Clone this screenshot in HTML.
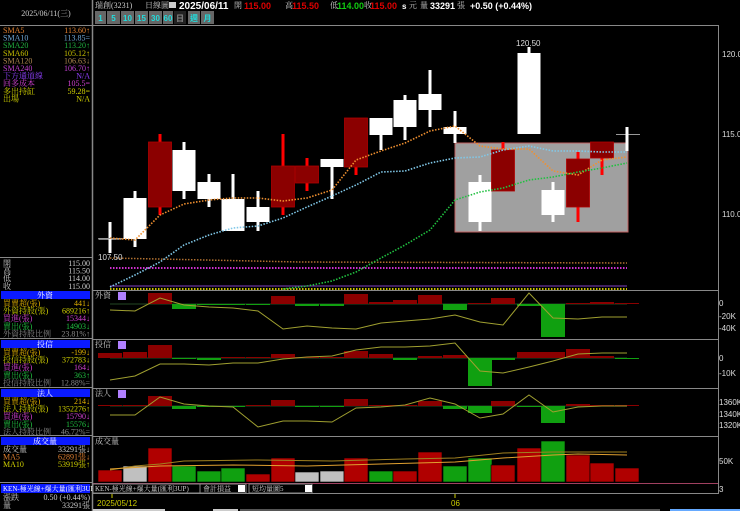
<!DOCTYPE html>
<html><head><meta charset="utf-8">
<style>
html,body{margin:0;padding:0;background:#000;width:740px;height:511px;overflow:hidden}
svg{display:block}
text{font-family:"Liberation Serif","Noto Serif CJK SC","Noto Sans CJK TC",serif;font-size:8px}
.b{font-family:"Liberation Sans","Noto Sans CJK TC",sans-serif;font-weight:bold}
.ax{font-family:"Liberation Sans",sans-serif;font-size:8px;fill:#ddd}
</style></head><body>
<svg id="s" width="740" height="511" viewBox="0 0 740 511" xmlns="http://www.w3.org/2000/svg">
<rect width="740" height="511" fill="#000"/>
<g id="g"></g>
<!-- frames -->
<line x1="92.5" y1="0" x2="92.5" y2="511" stroke="#888" stroke-width="1.5"/>
<line x1="0" y1="25.5" x2="92" y2="25.5" stroke="#888"/>
<line x1="93" y1="25.5" x2="718" y2="25.5" stroke="#888"/>
<line x1="718.5" y1="25" x2="718.5" y2="494" stroke="#888"/>
<line x1="93" y1="290.5" x2="718" y2="290.5" stroke="#888"/>
<line x1="93" y1="339.5" x2="718" y2="339.5" stroke="#888"/>
<line x1="93" y1="388.5" x2="718" y2="388.5" stroke="#888"/>
<line x1="93" y1="436.5" x2="718" y2="436.5" stroke="#888"/>
<line x1="93" y1="483.5" x2="718" y2="483.5" stroke="#a04060"/>
<line x1="93" y1="493.5" x2="718" y2="493.5" stroke="#888"/>
<line x1="0" y1="257.5" x2="92" y2="257.5" stroke="#888"/>
<line x1="0" y1="338.5" x2="92" y2="338.5" stroke="#888"/>
<line x1="0" y1="387.5" x2="92" y2="387.5" stroke="#888"/>
<line x1="0" y1="435.5" x2="92" y2="435.5" stroke="#888"/>
<line x1="0" y1="482.5" x2="92" y2="482.5" stroke="#888"/>

<!-- header -->
<text x="95" y="8" fill="#ccc">瑞創(3231)</text>
<text x="145" y="8" fill="#ccc">日線圖</text>
<rect x="169" y="2" width="7" height="6" fill="#ccc"/>
<text x="179" y="9" class="b" fill="#fff" font-size="10" style="font-size:10px">2025/06/11</text>
<text x="234" y="8" fill="#ccc">開</text>
<text x="244" y="9" class="b" fill="#d00" style="font-size:9px">115.00</text>
<text x="285" y="8" fill="#ccc">高</text>
<text x="292" y="9" class="b" fill="#d00" style="font-size:9px">115.50</text>
<text x="330" y="8" fill="#ccc">低</text>
<text x="337" y="9" class="b" fill="#1c1" style="font-size:9px">114.00</text>
<text x="364" y="8" fill="#ccc">收</text>
<text x="370" y="9" class="b" fill="#d00" style="font-size:9px">115.00</text>
<text x="402" y="9" class="b" fill="#fff" style="font-size:8px">s</text>
<text x="409" y="8" fill="#ccc">元</text>
<text x="420" y="8" fill="#ccc">量</text>
<text x="430" y="9" class="b" fill="#fff" style="font-size:9px">33291</text>
<text x="457" y="8" fill="#ccc">張</text>
<text x="470" y="9" class="b" fill="#fff" style="font-size:9px">+0.50 (+0.44%)</text>
<g id="tabs"></g>
<text x="46" y="16" fill="#ccc" text-anchor="middle">2025/06/11(三)</text>

<!-- left list -->
<g id="left"></g>

<!-- axis labels -->
<text x="722" y="57" class="ax">120.0</text>
<text x="722" y="137" class="ax">115.0</text>
<text x="722" y="217" class="ax">110.0</text>
<text x="719" y="306" class="ax">0</text>
<text x="719" y="319" class="ax">-20K</text>
<text x="719" y="331" class="ax">-40K</text>
<text x="719" y="361" class="ax">0</text>
<text x="719" y="376" class="ax">-10K</text>
<text x="719" y="405" class="ax">1360K</text>
<text x="719" y="417" class="ax">1340K</text>
<text x="719" y="428" class="ax">1320K</text>
<text x="719" y="464" class="ax">50K</text>
<text x="719" y="492" class="ax">3</text>
<text x="516" y="46" class="ax" fill="#fff">120.50</text>
<text x="98" y="260" class="ax" fill="#fff">107.50</text>

<!-- panel titles -->
<text x="95" y="298" fill="#ccc">外資</text>
<text x="95" y="347" fill="#ccc">投信</text>
<text x="95" y="396" fill="#ccc">法人</text>
<text x="95" y="444" fill="#ccc">成交量</text>
<g fill="#b080ff"><rect x="118" y="292" width="8" height="8"/><rect x="118" y="341" width="8" height="8"/><rect x="118" y="390" width="8" height="8"/></g>

<!-- controls -->
<rect x="93" y="484" width="107" height="9" fill="#000" stroke="#888"/>
<text x="95" y="491" fill="#ccc" style="font-size:7px">KEN-極光線+爆大量(匯利3UP)</text>
<rect x="200" y="484" width="46" height="9" fill="#000" stroke="#888"/>
<text x="203" y="491" fill="#ccc" style="font-size:7px">會計損益</text>
<rect x="238" y="485" width="7" height="7" fill="#fff"/>
<rect x="249" y="484" width="63" height="9" fill="#000" stroke="#888"/>
<text x="252" y="491" fill="#ccc" style="font-size:7px">短均量圖5</text>
<rect x="305" y="485" width="7" height="7" fill="#fff"/>
<line x1="112" y1="494" x2="112" y2="498" stroke="#cc0"/>
<line x1="455" y1="494" x2="455" y2="498" stroke="#cc0"/>
<text x="97" y="506" fill="#cc0" class="b" style="font-weight:normal;font-size:8px">2025/05/12</text>
<text x="451" y="506" fill="#cc0" class="b" style="font-weight:normal;font-size:8px">06</text>
<g fill="#ccc"><rect x="93" y="509" width="42" height="2"/><rect x="120" y="509" width="45" height="2"/><rect x="213" y="509" width="25" height="2"/><rect x="240" y="509" width="420" height="2" fill="#555"/><rect x="670" y="509" width="70" height="2" fill="#6af"/></g>
</svg>
<script>
var NS="http://www.w3.org/2000/svg",g=document.getElementById('g');
function el(t,a,p){var e=document.createElementNS(NS,t);for(var k in a)e.setAttribute(k,a[k]);(p||g).appendChild(e);return e;}
function rect(x,y,w,h,f,p){el('rect',{x:x,y:y,width:w,height:h,fill:f},p);}
// tabs
var tb=document.getElementById('tabs');
[["1",95,11],["5",107,13],["10",121,13],["15",135,13],["30",149,13],["60",163,10],["日",174,12],["週",188,12],["月",201,13]].forEach(function(t){
 rect(t[1],11,t[2],13,t[0]=="日"?"#222":"#666",tb);
 var e=el('text',{x:t[1]+t[2]/2,y:21,fill:t[0]=="日"?"#888":"#2dd","text-anchor":"middle","class":"b",style:"font-size:8px"},tb);e.textContent=t[0];
});
// left list
var L=document.getElementById('left');
function lt(x,y,s,c,anc){var e=el('text',{x:x,y:y,fill:c,"text-anchor":anc||"start"},L);e.textContent=s;}
var rows=[["SMA5","113.60↑","#e08030"],["SMA10","113.85=","#70a8d8"],["SMA20","113.20↑","#20b040"],["SMA60","105.12↑","#c8c000"],["SMA120","106.63↓","#b08850"],["SMA240","106.70↑","#c040d0"],["下方通道線","N/A","#9040ff"],["回多成本","105.5=","#d040d0"],["多出持缸","59.28=","#d0d000"],["出場","N/A","#d0d000"]];
rows.forEach(function(r,i){var y=33+i*7.6;lt(3,y,r[0],r[2]);lt(90,y,r[1],r[2],"end");});
[["開","115.00"],["高","115.50"],["低","114.00"],["收","115.00"]].forEach(function(r,i){var y=266+i*7.6;lt(3,y,r[0],"#ccc");lt(90,y,r[1],"#ccc","end");});
function sect(y,title,items){rect(1,y,89,8,"#0a1aff",L);var e=el('text',{x:45,y:y+7,fill:"#fff","text-anchor":"middle"},L);e.textContent=title;
 items.forEach(function(r,i){var yy=y+15+i*7.6;lt(3,yy,r[0],r[2]);lt(90,yy,r[1],r[3]||r[2],"end");});}
sect(291,"外資",[["買賣超(張)","441↓","#e0b000"],["外資持股(張)","689216↑","#d0d000"],["買進(張)","15344↓","#d040d0"],["賣出(張)","14903↓","#20c040"],["外資持股比例","23.81%↑","#888"]]);
sect(340,"投信",[["買賣超(張)","-199↓","#e0b000"],["投信持股(張)","372783↓","#d0d000"],["買進(張)","164↓","#d040d0"],["賣出(張)","363↑","#20c040"],["投信持股比例","12.88%=","#888"]]);
sect(389,"法人",[["買賣超(張)","214↓","#e0b000"],["法人持股(張)","1352276↑","#d0d000"],["買進(張)","15790↓","#d040d0"],["賣出(張)","15576↓","#20c040"],["法人持股比例","46.72%=","#888"]]);
sect(437,"成交量",[["成交量","33291張↓","#ccc"],["MA5","62891張↓","#e08030"],["MA10","53919張↑","#d0d000"]]);
rect(1,484,89,9,"#0a1aff",L);var e=el('text',{x:3,y:491,fill:"#fff",style:"font-size:7px"},L);e.textContent="KEN-極光線+爆大量(匯利3UP)";
lt(3,500,"漲跌","#ccc");lt(90,500,"0.50 (+0.44%)","#ccc","end");lt(3,508,"量","#ccc");lt(90,508,"33291張","#ccc","end");

var X=[110,135,160,184,209,233,258,283,307,332,356,381,405,430,455,480,503,529,553,578,602,627];
// gray box
el('rect',{x:455,y:143,width:173,height:89,fill:"#a0a0a0",stroke:"#c06060","stroke-width":1});
// bottom lines of main chart
function poly(pts,c,dash,w){el('polyline',{points:pts.map(function(p){return p.join(',')}).join(' '),fill:"none",stroke:c,"stroke-width":w||1.6,"stroke-dasharray":dash||""});}
poly([[110,258],[300,262],[627,263]],"#b07030","1.5 1.5",1.5);
poly([[110,268],[627,268]],"#d030d0","1.5 1.5",2);
poly([[110,286],[627,286]],"#8040c0","",1);
poly([[110,289],[627,289]],"#c8c000","1.5 1.5",2);
// candles
var C=[[238,239,222,253,'w'],[198,239,191,247,'w'],[142,207,134,215,'r'],[150,191,142,199,'w'],[182,199,174,207,'w'],[199,231,174,231,'w'],[207,222,191,231,'w'],[166,207,134,215,'r'],[166,183,158,191,'r'],[159,167,159,199,'w'],[118,167,118,175,'r'],[118,135,118,150,'w'],[100,127,95,140,'w'],[94,110,70,127,'w'],[127,134,111,143,'w'],[182,222,175,231,'w'],[150,191,142,191,'r'],[53,134,47,134,'w'],[190,215,182,222,'w'],[159,207,152,222,'r'],[142,158,142,175,'r']];
C.forEach(function(c,i){var x=X[i];
 if(c[4]=='w'){rect(x-1.5,c[2],3,c[3]-c[2],"#fff");rect(x-11.5,c[0],23,Math.max(1.5,c[1]-c[0]),"#fff");}
 else{rect(x-1.5,c[2],3,c[3]-c[2],"#f00");el('rect',{x:x-11.5,y:c[0],width:23,height:c[1]-c[0],fill:"#8b0000",stroke:"#b00000","stroke-width":0.8});}
});
el('line',{x1:99,y1:238.5,x2:122,y2:238.5,stroke:"#999"});
el('line',{x1:616,y1:134.5,x2:640,y2:134.5,stroke:"#999"});
rect(625.5,127,3,24,"#fff");
// MAs
poly([[110,238],[135,240],[160,215],[184,204],[209,200],[233,198],[258,198],[283,201],[307,198],[332,190],[356,160],[381,151],[405,143],[430,131],[455,126],[480,146],[503,149],[529,149],[553,171],[578,175],[602,160],[627,157]],"#f09030","1.5 1.5");
poly([[110,287],[135,275],[160,262],[184,245],[209,235],[233,228],[258,226],[283,218],[307,207],[332,196],[356,185],[381,172],[405,171],[430,163],[455,158],[480,157],[503,150],[529,146],[553,151],[578,151],[602,152],[627,152]],"#80c8e8","1.5 1.5");
poly([[283,289],[307,286],[332,281],[356,272],[381,258],[405,245],[430,230],[455,200],[480,192],[503,188],[529,180],[553,177],[578,172],[602,168],[627,163]],"#20c040","1.5 1.5");
// indicator panels
function bars(list,zero){list.forEach(function(b){var i=b[0]-1,x=X[i]-12,v=b[1];var col=v<0?"#8b0000":"#10a010";if(b[2])col=b[2];
 if(v<0)rect(x,zero+v,24,-v,col);else rect(x,zero,24,v,col);});}
function zl(y){el('line',{x1:110,y1:y,x2:627,y2:y,stroke:"#306030","stroke-width":0.8});}
zl(304);zl(358);zl(406);
bars([[3,-11],[4,5],[5,1],[6,1],[7,1],[8,-8],[9,2],[10,2],[11,-10],[12,-2],[13,-4],[14,-9],[15,6],[16,-1],[17,-6],[18,2],[19,33],[20,-1],[21,-2],[22,-1]],304);
bars([[1,-5],[2,-6],[3,-13],[4,1],[5,2],[6,-1],[7,-1],[8,-4],[9,-1],[10,-1],[11,-7],[12,-4],[13,2],[14,-2],[15,-3],[16,28],[17,2],[18,-6],[19,-6],[20,-9],[21,-2],[22,1]],358);
bars([[1,-1],[2,-1],[3,-10],[4,3],[5,1],[6,1],[7,-1],[8,-6],[9,1],[10,1],[11,-7],[12,-1],[13,-1],[14,-5],[15,3],[16,7],[17,-5],[18,1],[19,17],[20,-2],[21,-1],[22,-1]],406);
function ln(ys,c){poly(ys.map(function(y,i){return [X[i],y]}),c||"#a0a030","",1);}
ln([310,311,298,305,307,308,311,329,326,328,329,323,321,319,315,322,325,293,318,319,317,317]);
ln([380,376,364,364,365,363,363,359,357,356,350,347,347,346,343,371,373,367,361,354,353,353]);
ln([415,415,397,404,406,407,427,421,421,422,408,407,405,398,404,418,414,395,412,407,406,406]);
// volume
var V=[[470,'r'],[466,'g'],[448,'r'],[466,'G'],[471,'G'],[468,'G'],[474,'r'],[458,'r'],[472,'g'],[471,'g'],[458,'r'],[471,'G'],[471,'r'],[452,'r'],[466,'G'],[458,'G'],[465,'r'],[448,'r'],[441,'G'],[455,'r'],[463,'r'],[468,'r']];
V.forEach(function(v,i){var c=v[1]=='r'?"#b00000":v[1]=='g'?"#c0c0c0":"#10a010";el('rect',{x:X[i]-12,y:v[0],width:24,height:482-v[0],fill:c,stroke:"#000","stroke-width":0.6});});
poly([[110,470],[135,466],[160,464],[184,461],[258,460],[332,461],[405,459],[455,458],[503,453],[553,452],[627,452]],"#a08020","",1);
poly([[110,469],[160,466],[233,465],[307,466],[381,464],[455,462],[503,458],[553,455],[578,454],[627,455]],"#e0a030","",1);
</script>
</body></html>
